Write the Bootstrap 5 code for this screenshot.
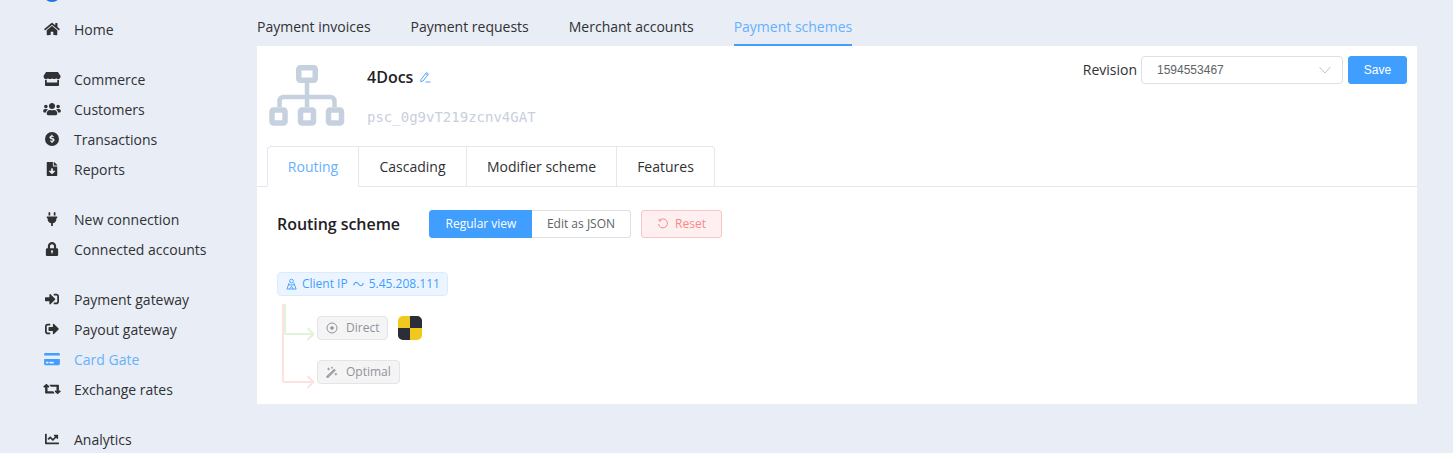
<!DOCTYPE html>
<html lang="en">

<head>
  <meta charset="UTF-8" />
  <title>Payment schemes</title>
  <meta name="viewport" content="width=device-width, initial-scale=1" />
  <link href="https://cdn.jsdelivr.net/npm/bootstrap@5.3.0/dist/css/bootstrap.min.css" rel="stylesheet" />
  <style>
    body {
      background-color: #e9edf6;
      font-family: "Open Sans", sans-serif;
      font-size: 14px;
      color: #303133;
      height: 453px;
      overflow: hidden;
    }

    .side-col {
      width: 257px;
      flex-shrink: 0;
      padding-left: 43px;
    }

    .logo-dot {
      width: 20px;
      height: 22px;
      border-radius: 50%;
      background-color: #1a73e8;
      margin-left: -1px;
      margin-top: -20px;
      margin-bottom: 12px;
    }

    .side-item {
      height: 30px;
      gap: 13px;
      color: #303133;
      text-decoration: none;
    }

    .side-item.current {
      color: #66b1ff;
    }

    .side-group {
      margin-bottom: 20px;
    }

    .side-ico {
      width: 18px;
      height: 14px;
      fill: currentColor;
    }

    .main-col {
      width: 1160px;
      flex-shrink: 0;
    }

    .top-tabs {
      gap: 40px;
      height: 46px;
      padding-top: 9px;
    }

    .top-tab {
      height: 37px;
      line-height: 36px;
      color: #303133;
      text-decoration: none;
    }

    .top-tab.current {
      color: #66b1ff;
      border-bottom: 2px solid #409eff;
    }

    .scheme-card {
      background-color: #fff;
      height: 358px;
    }

    .scheme-head {
      height: 100px;
      padding: 10px 10px 0 12px;
    }

    .scheme-ico {
      width: 78px;
      height: 62px;
      margin-top: 9px;
      margin-right: 20px;
    }

    .scheme-name {
      font-size: 16px;
      font-weight: 600;
      line-height: 22px;
      margin-top: 10px;
      gap: 7px;
      color: #1f2126;
    }

    .scheme-id {
      font-family: "DejaVu Sans Mono", monospace;
      font-size: 14px;
      color: #c8d0dc;
      line-height: 18px;
      margin-top: 20px;
    }

    .rev-label {
      line-height: 28px;
    }

    .rev-select {
      width: 202px;
      height: 28px;
      margin-left: 4px;
      padding: 0 30px 0 15px;
      font-family: "Liberation Sans", sans-serif;
      font-size: 12px;
      color: #606266;
      border: 1px solid #dcdfe6;
      border-radius: 4px;
      background-size: 12px 8px;
      background-position: right 11px center;
      background-image: url("data:image/svg+xml,%3csvg xmlns='http://www.w3.org/2000/svg' viewBox='0 0 12 8'%3e%3cpath fill='none' stroke='%23c0c4cc' d='M.5 1l5.5 6 5.5-6'/%3e%3c/svg%3e");
    }

    .save-btn {
      width: 59px;
      height: 28px;
      margin-left: 5px;
      padding: 0;
      font-family: "Liberation Sans", sans-serif;
      font-size: 12px;
      color: #fff;
      background-color: #409eff;
      border: 1px solid #409eff;
      border-radius: 3px;
    }

    .sub-tabs {
      padding-left: 10px;
      border-bottom: 1px solid #e4e7ed;
      height: 41px;
    }

    .sub-tab {
      height: 41px;
      line-height: 40px;
      text-align: center;
      color: #303133;
      text-decoration: none;
      background-color: #fff;
      border: 1px solid #e4e7ed;
      border-left-width: 0;
    }

    .sub-tab:first-child {
      border-left-width: 1px;
      border-top-left-radius: 4px;
      color: #66b1ff;
      border-bottom-color: #fff;
    }

    .sub-tab:last-child {
      border-top-right-radius: 4px;
    }

    .routing-body {
      padding: 23px 20px 0;
    }

    .routing-title {
      font-size: 16px;
      font-weight: 600;
      letter-spacing: -.05px;
      width: 152px;
      color: #1f2126;
    }

    .view-btn {
      height: 28px;
      padding: 0;
      font-size: 12px;
      color: #606266;
      background-color: #fff;
      border: 1px solid #dcdfe6;
    }

    .view-on {
      width: 104px;
      color: #fff;
      background-color: #409eff;
      border-color: #409eff;
      border-radius: 3px 0 0 3px;
    }

    .view-off {
      width: 99px;
      border-left-width: 0;
      border-radius: 0 3px 3px 0;
    }

    .reset-btn {
      width: 81px;
      height: 28px;
      margin-left: 10px;
      padding: 0;
      font-size: 12px;
      color: #f78989;
      background-color: #fef0f0;
      border: 1px solid #fbc4c4;
      border-radius: 3px;
      gap: 6px;
    }

    .rule-chip {
      height: 24px;
      margin-top: 34px;
      padding: 0 7px 0 8px;
      gap: 5px;
      font-size: 12px;
      color: #409eff;
      background-color: #ecf5ff;
      border: 1px solid #d9ecff;
      border-radius: 4px;
    }

    .tree-lines {
      width: 40px;
      height: 88px;
      margin-top: 8px;
      flex-shrink: 0;
    }

    .tree-nodes {
      gap: 20px;
      margin-top: 20px;
    }

    .node-chip {
      height: 24px;
      padding: 0 8px;
      gap: 8px;
      font-size: 12px;
      color: #909399;
      background-color: #f4f4f5;
      border: 1px solid #e4e4e6;
      border-radius: 4px;
    }

    .bank-ico {
      width: 24px;
      height: 24px;
      margin-left: 10px;
    }
  </style>
</head>

<body>
  <div class="d-flex">
    <div class="side-col">
      <div class="logo-dot"></div>
      <div class="side-group">
        <a class="side-item d-flex align-items-center" href="#">
          <svg class="side-ico" viewBox="0 0 576 512"><path d="M280.37 148.26L96 300.11V464a16 16 0 0 0 16 16l112.06-.29a16 16 0 0 0 15.92-16V368a16 16 0 0 1 16-16h64a16 16 0 0 1 16 16v95.64a16 16 0 0 0 16 16.05L464 480a16 16 0 0 0 16-16V300L295.67 148.26a12.19 12.19 0 0 0-15.3 0zM571.6 251.47L488 182.56V44.05a12 12 0 0 0-12-12h-56a12 12 0 0 0-12 12v72.61L318.47 43a48 48 0 0 0-61 0L4.34 251.47a12 12 0 0 0-1.6 16.9l25.5 31A12 12 0 0 0 45.15 301l235.22-193.74a12.19 12.19 0 0 1 15.3 0L530.9 301a12 12 0 0 0 16.9-1.6l25.5-31a12 12 0 0 0-1.7-16.93z"/></svg>
          <span>Home</span>
        </a>
      </div>
      <div class="side-group">
        <a class="side-item d-flex align-items-center" href="#">
          <svg class="side-ico" viewBox="0 0 616 512"><path d="M602 118.6L537.1 15C531.3 5.7 521 0 510 0H106C95 0 84.7 5.7 78.9 15L14 118.6c-33.9 54.1-3.9 129.3 59.4 137.9 4.6.6 9.2.9 13.7.9 29.9 0 56.4-13.1 74.6-33.4 18.2 20.3 44.8 33.4 74.6 33.4 29.9 0 56.4-13.1 74.6-33.4 18.2 20.3 44.8 33.4 74.6 33.4 29.9 0 56.4-13.1 74.6-33.4 18.3 20.3 44.8 33.4 74.6 33.4 4.6 0 9.1-.3 13.7-.9 63.5-8.5 93.6-83.7 59.6-137.9zM529.5 288c-10 0-19.9-1.5-29.5-3.8V384H116v-99.8c-9.6 2.2-19.5 3.8-29.5 3.8-6 0-12.1-.4-18-1.2-5.6-.8-11.1-2.1-16.4-3.6V480c0 17.7 14.3 32 32 32h448c17.7 0 32-14.3 32-32V283.2c-5.4 1.6-10.8 2.9-16.4 3.6-6.1.8-12.1 1.2-18.2 1.2z"/></svg>
          <span>Commerce</span>
        </a>
        <a class="side-item d-flex align-items-center" href="#">
          <svg class="side-ico" viewBox="0 0 640 512"><path d="M96 224c35.3 0 64-28.7 64-64s-28.7-64-64-64-64 28.7-64 64 28.7 64 64 64zm448 0c35.3 0 64-28.7 64-64s-28.7-64-64-64-64 28.7-64 64 28.7 64 64 64zm32 32h-64c-17.6 0-33.5 7.1-45.1 18.6 40.3 22.1 68.9 62 75.1 109.4h66c17.7 0 32-14.3 32-32v-32c0-35.3-28.7-64-64-64zm-256 0c61.9 0 112-50.1 112-112S381.9 32 320 32 208 82.1 208 144s50.1 112 112 112zm76.8 32h-8.3c-20.8 10-43.9 16-68.5 16s-47.6-6-68.5-16h-8.3C179.6 288 128 339.6 128 403.2V432c0 26.5 21.5 48 48 48h288c26.5 0 48-21.5 48-48v-28.8c0-63.6-51.6-115.2-115.2-115.2zm-223.7-13.4C161.5 263.1 145.6 256 128 256H64c-35.3 0-64 28.7-64 64v32c0 17.7 14.3 32 32 32h65.9c6.3-47.4 34.9-87.3 75.2-109.4z"/></svg>
          <span>Customers</span>
        </a>
        <a class="side-item d-flex align-items-center" href="#">
          <svg class="side-ico" viewBox="2 1 14 14"><path fill-rule="evenodd" d="M9 1a7 7 0 1 1 0 14A7 7 0 0 1 9 1zm-.6 2.600v1c-1.100.2-1.900.9-1.900 1.900 0 1.100.9 1.500 2 1.800 1.100.3 1.300.5 1.300.8 0 .4-.4.6-1 .6-.5 0-1-.2-1.400-.5l-.7.9c.5.4 1.100.7 1.700.8v1h1.200v-1c1.100-.2 1.900-.9 1.900-2 0-1.200-.9-1.600-2-1.900-1-.3-1.300-.4-1.300-.7 0-.3.3-.5.8-.5.4 0 .9.1 1.300.4l.6-.9c-.4-.3-.9-.5-1.400-.6v-1z"/></svg>
          <span>Transactions</span>
        </a>
        <a class="side-item d-flex align-items-center" href="#">
          <svg class="side-ico" viewBox="0 0 384 512"><path d="M224 136V0H24C10.7 0 0 10.7 0 24v464c0 13.3 10.7 24 24 24h336c13.3 0 24-10.7 24-24V160H248c-13.2 0-24-10.8-24-24zm76.450 211.360l-96.420 95.700c-6.650 6.610-17.390 6.610-24.040 0l-96.420-95.700C73.420 337.290 80.540 320 94.820 320H160v-80c0-8.840 7.160-16 16-16h32c8.840 0 16 7.160 16 16v80h65.180c14.280 0 21.400 17.290 11.270 27.360zM377 105L279.100 7c-4.500-4.500-10.600-7-17-7H256v128h128v-6.100c0-6.300-2.500-12.400-7-16.900z"/></svg>
          <span>Reports</span>
        </a>
      </div>
      <div class="side-group">
        <a class="side-item d-flex align-items-center" href="#">
          <svg class="side-ico" viewBox="0 0 384 512"><path d="M320 32a32 32 0 0 0-64 0v96h64zm48 128H16a16 16 0 0 0-16 16v32a16 16 0 0 0 16 16h16v32a160.070 160.070 0 0 0 128 156.800V512h64v-99.200A160.070 160.070 0 0 0 352 256v-32h16a16 16 0 0 0 16-16v-32a16 16 0 0 0-16-16zM128 32a32 32 0 0 0-64 0v96h64z"/></svg>
          <span>New connection</span>
        </a>
        <a class="side-item d-flex align-items-center" href="#">
          <svg class="side-ico" viewBox="0 0 448 512"><path fill-rule="evenodd" d="M400 224h-24v-72C376 68.200 307.800 0 224 0S72 68.200 72 152v72H48c-26.500 0-48 21.500-48 48v192c0 26.500 21.500 48 48 48h352c26.500 0 48-21.500 48-48V272c0-26.500-21.500-48-48-48zm-104 0H152v-72c0-39.700 32.300-72 72-72s72 32.300 72 72v72zM224 304a40 40 0 0 0-20 74.600V416h40v-37.400A40 40 0 0 0 224 304z"/></svg>
          <span>Connected accounts</span>
        </a>
      </div>
      <div class="side-group">
        <a class="side-item d-flex align-items-center" href="#">
          <svg class="side-ico" viewBox="0 0 512 512"><path d="M416 448h-84c-6.600 0-12-5.400-12-12v-40c0-6.600 5.400-12 12-12h84c17.700 0 32-14.300 32-32V160c0-17.700-14.300-32-32-32h-84c-6.600 0-12-5.400-12-12V76c0-6.600 5.400-12 12-12h84c53 0 96 43 96 96v192c0 53-43 96-96 96zm-47-201L201 79c-15-15-41-4.500-41 17v96H24c-13.300 0-24 10.700-24 24v96c0 13.300 10.700 24 24 24h136v96c0 21.500 26 32 41 17l168-168c9.300-9.400 9.300-24.600 0-34z"/></svg>
          <span>Payment gateway</span>
        </a>
        <a class="side-item d-flex align-items-center" href="#">
          <svg class="side-ico" viewBox="0 0 512 512"><path d="M497 273L329 441c-15 15-41 4.500-41-17v-96H152c-13.300 0-24-10.700-24-24v-96c0-13.300 10.700-24 24-24h136V88c0-21.400 25.900-32 41-17l168 168c9.300 9.400 9.300 24.600 0 34zM192 436v-40c0-6.600-5.400-12-12-12H96c-17.700 0-32-14.300-32-32V160c0-17.700 14.300-32 32-32h84c6.600 0 12-5.400 12-12V76c0-6.600-5.400-12-12-12H96c-53 0-96 43-96 96v192c0 53 43 96 96 96h84c6.600 0 12-5.400 12-12z"/></svg>
          <span>Payout gateway</span>
        </a>
        <a class="side-item current d-flex align-items-center" href="#">
          <svg class="side-ico" viewBox="0 0 576 512"><path fill="#409eff" d="M0 432c0 26.500 21.500 48 48 48h480c26.500 0 48-21.500 48-48V256H0v176zm192-68c0-6.600 5.400-12 12-12h136c6.600 0 12 5.400 12 12v40c0 6.600-5.400 12-12 12H204c-6.600 0-12-5.400-12-12v-40zm-128 0c0-6.600 5.400-12 12-12h72c6.600 0 12 5.400 12 12v40c0 6.600-5.400 12-12 12H76c-6.600 0-12-5.400-12-12v-40zM576 80v48H0V80c0-26.500 21.500-48 48-48h480c26.500 0 48 21.500 48 48z"/></svg>
          <span>Card Gate</span>
        </a>
        <a class="side-item d-flex align-items-center" href="#">
          <svg class="side-ico" viewBox="0 0 640 512"><path d="M116 60l112 108-44 44-28-28v152h204l60 80H92a24 24 0 0 1-24-24V184l-28 28-44-44zM524 452L412 344l44-44 28 28V176H280l-60-80h328a24 24 0 0 1 24 24v208l28-28 44 44z"/></svg>
          <span>Exchange rates</span>
        </a>
      </div>
      <div class="side-group">
        <a class="side-item d-flex align-items-center" href="#">
          <svg class="side-ico" viewBox="0 0 512 512"><path d="M496 384H64V80c0-8.840-7.160-16-16-16H16C7.160 64 0 71.160 0 80v336c0 17.670 14.330 32 32 32h464c8.840 0 16-7.160 16-16v-32c0-8.840-7.160-16-16-16zM464 96H345.940c-21.380 0-32.090 25.850-16.970 40.970l32.400 32.400L288 242.750l-73.370-73.370c-12.500-12.500-32.760-12.500-45.250 0l-68.690 68.690c-6.250 6.250-6.250 16.380 0 22.630l22.620 22.620c6.250 6.250 16.380 6.250 22.630 0L192 237.250l73.370 73.370c12.500 12.500 32.760 12.500 45.250 0l96-96 32.400 32.400c15.120 15.120 40.970 4.410 40.970-16.970V112c.010-8.840-7.150-16-15.990-16z"/></svg>
          <span>Analytics</span>
        </a>
      </div>
    </div>

    <div class="main-col">
      <div class="top-tabs d-flex">
        <a class="top-tab" href="#">Payment invoices</a>
        <a class="top-tab" href="#">Payment requests</a>
        <a class="top-tab" href="#">Merchant accounts</a>
        <a class="top-tab current" href="#">Payment schemes</a>
      </div>

      <div class="scheme-card">
        <div class="scheme-head d-flex">
          <svg class="scheme-ico" viewBox="0 0 78 62" fill="none" stroke="#c6d1df" stroke-width="5.5">
            <rect x="29.750" y="2.750" width="16.500" height="12.500" rx="1.500" />
            <path d="M38 17v25M10.500 42v-6a4 4 0 0 1 4-4h47a4 4 0 0 1 4 4v6" stroke-width="4.500" />
            <rect x="3" y="45" width="13" height="13" rx="1.500" />
            <rect x="31.500" y="45" width="13" height="13" rx="1.500" />
            <rect x="59.500" y="45" width="13" height="13" rx="1.500" />
          </svg>
          <div>
            <div class="scheme-name d-flex align-items-center">
              <span>4Docs</span>
              <svg width="11" height="12" viewBox="0 0 11 12" fill="none" stroke="#409eff" stroke-width=".9"><path d="M1 8.500L6.500 1.500l2 1.500L3 10l-2.200.7zM5.500 2.800l2 1.600M5.500 11h5" /></svg>
            </div>
            <div class="scheme-id">psc_0g9vT219zcnv4GAT</div>
          </div>
          <div class="d-flex align-items-start ms-auto">
            <span class="rev-label">Revision</span>
            <select class="form-select rev-select">
              <option>1594553467</option>
            </select>
            <button class="btn save-btn" type="button">Save</button>
          </div>
        </div>

        <div class="sub-tabs d-flex">
          <a class="sub-tab" style="width: 92px" href="#">Routing</a>
          <a class="sub-tab" style="width: 108px" href="#">Cascading</a>
          <a class="sub-tab" style="width: 150px" href="#">Modifier scheme</a>
          <a class="sub-tab" style="width: 98px" href="#">Features</a>
        </div>

        <div class="routing-body">
          <div class="d-flex align-items-center">
            <div class="routing-title">Routing scheme</div>
            <div class="btn-group">
              <button class="btn view-btn view-on" type="button">Regular view</button>
              <button class="btn view-btn view-off" type="button">Edit as JSON</button>
            </div>
            <button class="btn reset-btn d-inline-flex align-items-center justify-content-center" type="button">
              <svg width="12" height="12" viewBox="0 0 12 12" fill="none" stroke="#f78989"><path d="M2.500 2.500A4.500 4.500 0 1 1 1.500 6M2.200.8v2.200h2.200" /></svg>
              Reset
            </button>
          </div>

          <div class="rule-chip d-inline-flex align-items-center">
            <svg width="11" height="12" viewBox="0 0 12 12" fill="none" stroke="#409eff"><circle cx="6" cy="2.800" r="2" /><path d="M3.500 4.800L1 11.500h10L8.500 4.800M2.500 7h7M4 11.500l2-3 2 3" /></svg>
            <span>Client IP</span>
            <svg width="11" height="8" viewBox="0 0 12 8" fill="none" stroke="#409eff" stroke-width="1.200"><path d="M.8 5.500C1.500 2 3.800 1 6 4s4.500 2.500 5.200-1" /></svg>
            <span>5.45.208.111</span>
          </div>

          <div class="d-flex">
            <svg class="tree-lines" viewBox="0 0 40 88" fill="none" stroke-width="2">
              <path d="M6 0v77a1 1 0 0 0 1 1h29.500M30.500 72l6 6-6 6" stroke="#fde2e2" />
              <path d="M8 0v29a1 1 0 0 0 1 1h27.500M30.500 24l6 6-6 6" stroke="#e1f3d8" />
            </svg>
            <div class="tree-nodes d-flex flex-column align-items-start">
              <div class="d-flex align-items-center">
                <div class="node-chip d-flex align-items-center">
                  <svg width="12" height="12" viewBox="0 0 12 12" fill="none" stroke="#909399"><circle cx="6" cy="6" r="5" /><circle cx="6" cy="6" r="1.800" fill="#909399" stroke="none" /></svg>
                  <span>Direct</span>
                </div>
                <svg class="bank-ico" viewBox="0 0 24 24">
                  <rect width="24" height="24" rx="5" fill="#f1c81e" />
                  <path d="M12 0h7a5 5 0 0 1 5 5v7H12zM12 24H5a5 5 0 0 1-5-5v-7h12z" fill="#2a2e3b" />
                </svg>
              </div>
              <div class="node-chip d-flex align-items-center">
                <svg width="12" height="12" viewBox="0 0 14 14" fill="none" stroke="#909399" stroke-width="1.300"><path d="M1 12.500L9.500 4l1 1L2 13.500zM8 5.500l1 1" /><path d="M3 2v3M1.500 3.500h3M11.500 8v3M10 9.500h3M7 1v2M6 2h2" stroke-width="1" /></svg>
                <span>Optimal</span>
              </div>
            </div>
          </div>
        </div>
      </div>
    </div>
  </div>
  <script src="https://cdn.jsdelivr.net/npm/bootstrap@5.3.0/dist/js/bootstrap.bundle.min.js"></script>
</body>

</html>
